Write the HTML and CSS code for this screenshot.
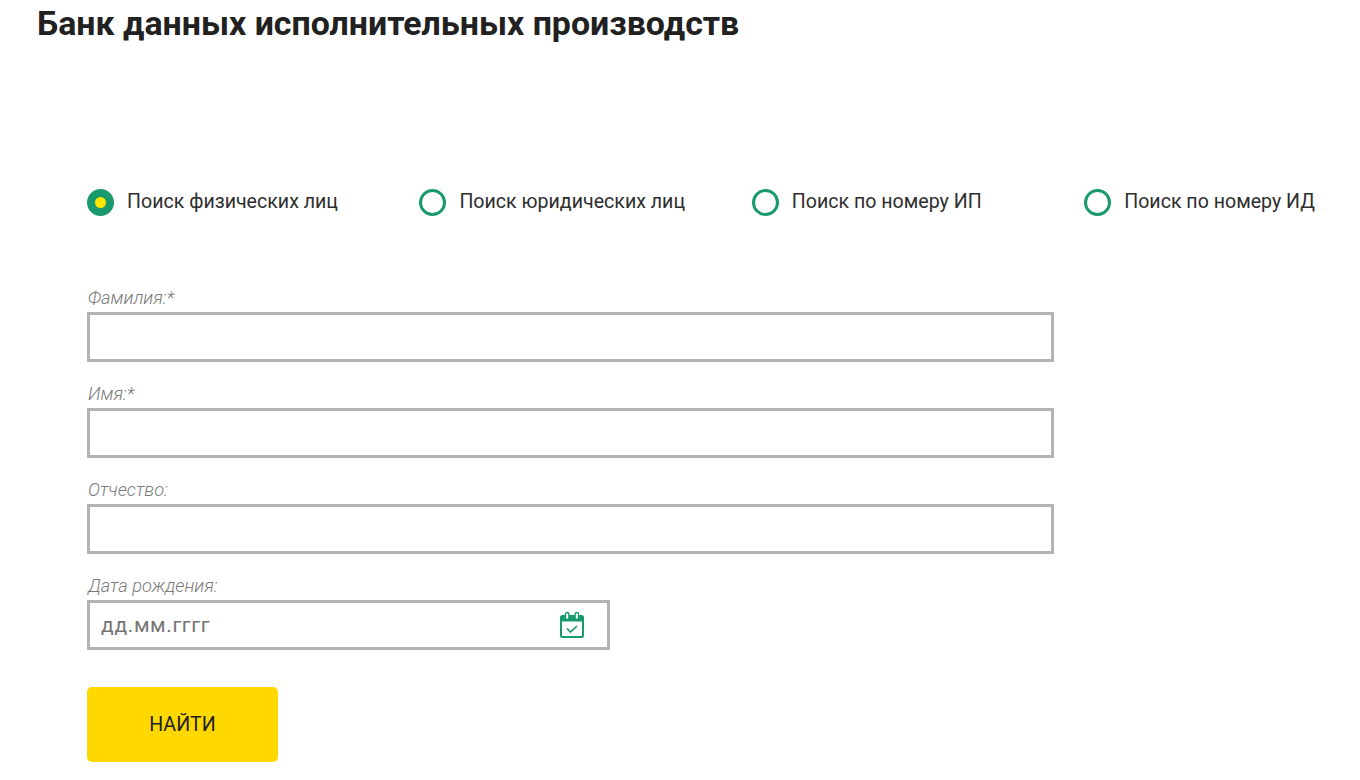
FILE: index.html
```html
<!DOCTYPE html>
<html lang="ru">

<head>
    <meta charset="UTF-8">
    <meta name="viewport" content="width=device-width, initial-scale=1.0">
    <title>Банк данных исполнительных производств</title>
    <link rel="stylesheet" href="styles.css">
</head>

<body>
    <h1 class="page-title">Банк данных исполнительных производств</h1>

    <form class="search-form">
        <div class="radio-row">
            <label class="radio-item"><span class="radio-mark radio-mark-on"></span>Поиск физических лиц</label>
            <label class="radio-item"><span class="radio-mark"></span>Поиск юридических лиц</label>
            <label class="radio-item"><span class="radio-mark"></span>Поиск по номеру ИП</label>
            <label class="radio-item"><span class="radio-mark"></span>Поиск по номеру ИД</label>
        </div>

        <div class="field">
            <label class="field-label">Фамилия:*</label>
            <div class="field-box"></div>
        </div>
        <div class="field">
            <label class="field-label">Имя:*</label>
            <div class="field-box"></div>
        </div>
        <div class="field">
            <label class="field-label">Отчество:</label>
            <div class="field-box"></div>
        </div>
        <div class="field">
            <label class="field-label">Дата рождения:</label>
            <div class="field-box field-box-date">
                <span class="date-hint">дд.мм.гггг</span>
                <svg class="date-icon" width="26" height="28" viewBox="0 0 26 28" fill="none">
                    <rect x="2" y="5" width="22" height="21" rx="1.5" stroke="#1a9a6c" stroke-width="2" />
                    <path d="M2 5.5h22V10H2z" fill="#1a9a6c" stroke="#1a9a6c" />
                    <rect x="6.5" y="1.5" width="3.4" height="7" rx="1.7" fill="#fff" stroke="#1a9a6c" stroke-width="1.4" />
                    <rect x="16.1" y="1.5" width="3.4" height="7" rx="1.7" fill="#fff" stroke="#1a9a6c" stroke-width="1.4" />
                    <path d="M8 17.5l3.5 3.5 6.5-6" stroke="#1a9a6c" stroke-width="1.7" />
                </svg>
            </div>
        </div>

        <button class="search-btn" type="button">НАЙТИ</button>
    </form>
</body>

</html>
```

FILE: styles.css
```css
html,
body {
    overflow: hidden;
}

body {
    font-family: Roboto, 'Liberation Sans', sans-serif;
    background-color: #fff;
    color: #212121;
    margin: 0;
    height: 780px;
}

.page-title {
    font-size: 33.9px;
    line-height: 36px;
    font-weight: 700;
    margin: 0;
    padding: 6px 0 0 37px;
}

.search-form {
    padding: 146px 0 0 87px;
}

.radio-row {
    display: grid;
    grid-template-columns: repeat(3, 332.4px) auto;
    margin-bottom: 70px;
}

.radio-item {
    display: flex;
    align-items: center;
    gap: 13px;
    font-size: 19.6px;
    line-height: 26px;
    height: 28px;
    color: #2e2e2e;
}

.radio-mark {
    width: 27px;
    height: 27px;
    box-sizing: border-box;
    border: 3px solid #1a9a6c;
    border-radius: 50%;
}

.radio-mark-on {
    background-color: #ffe600;
    border-width: 8px;
}

.field {
    margin-bottom: 20px;
}

.field-label {
    display: block;
    font-size: 18.2px;
    font-style: italic;
    font-weight: 300;
    line-height: 24px;
    color: #7a7a7a;
    margin-bottom: 2px;
    padding-left: 1px;
}

.field-box {
    width: 967px;
    height: 50px;
    box-sizing: border-box;
    border: 3px solid #b3b3b3;
}

.field-box-date {
    width: 523px;
    display: flex;
    align-items: center;
    justify-content: space-between;
    padding: 0 22px 0 11px;
}

.date-hint {
    font-size: 21px;
    color: #757575;
    letter-spacing: 0.6px;
}

.search-btn {
    display: block;
    width: 191px;
    height: 75px;
    margin-top: 37px;
    background-color: #ffd800;
    color: #212121;
    border: none;
    border-radius: 5px;
    font-family: inherit;
    font-size: 19.6px;
}
```
